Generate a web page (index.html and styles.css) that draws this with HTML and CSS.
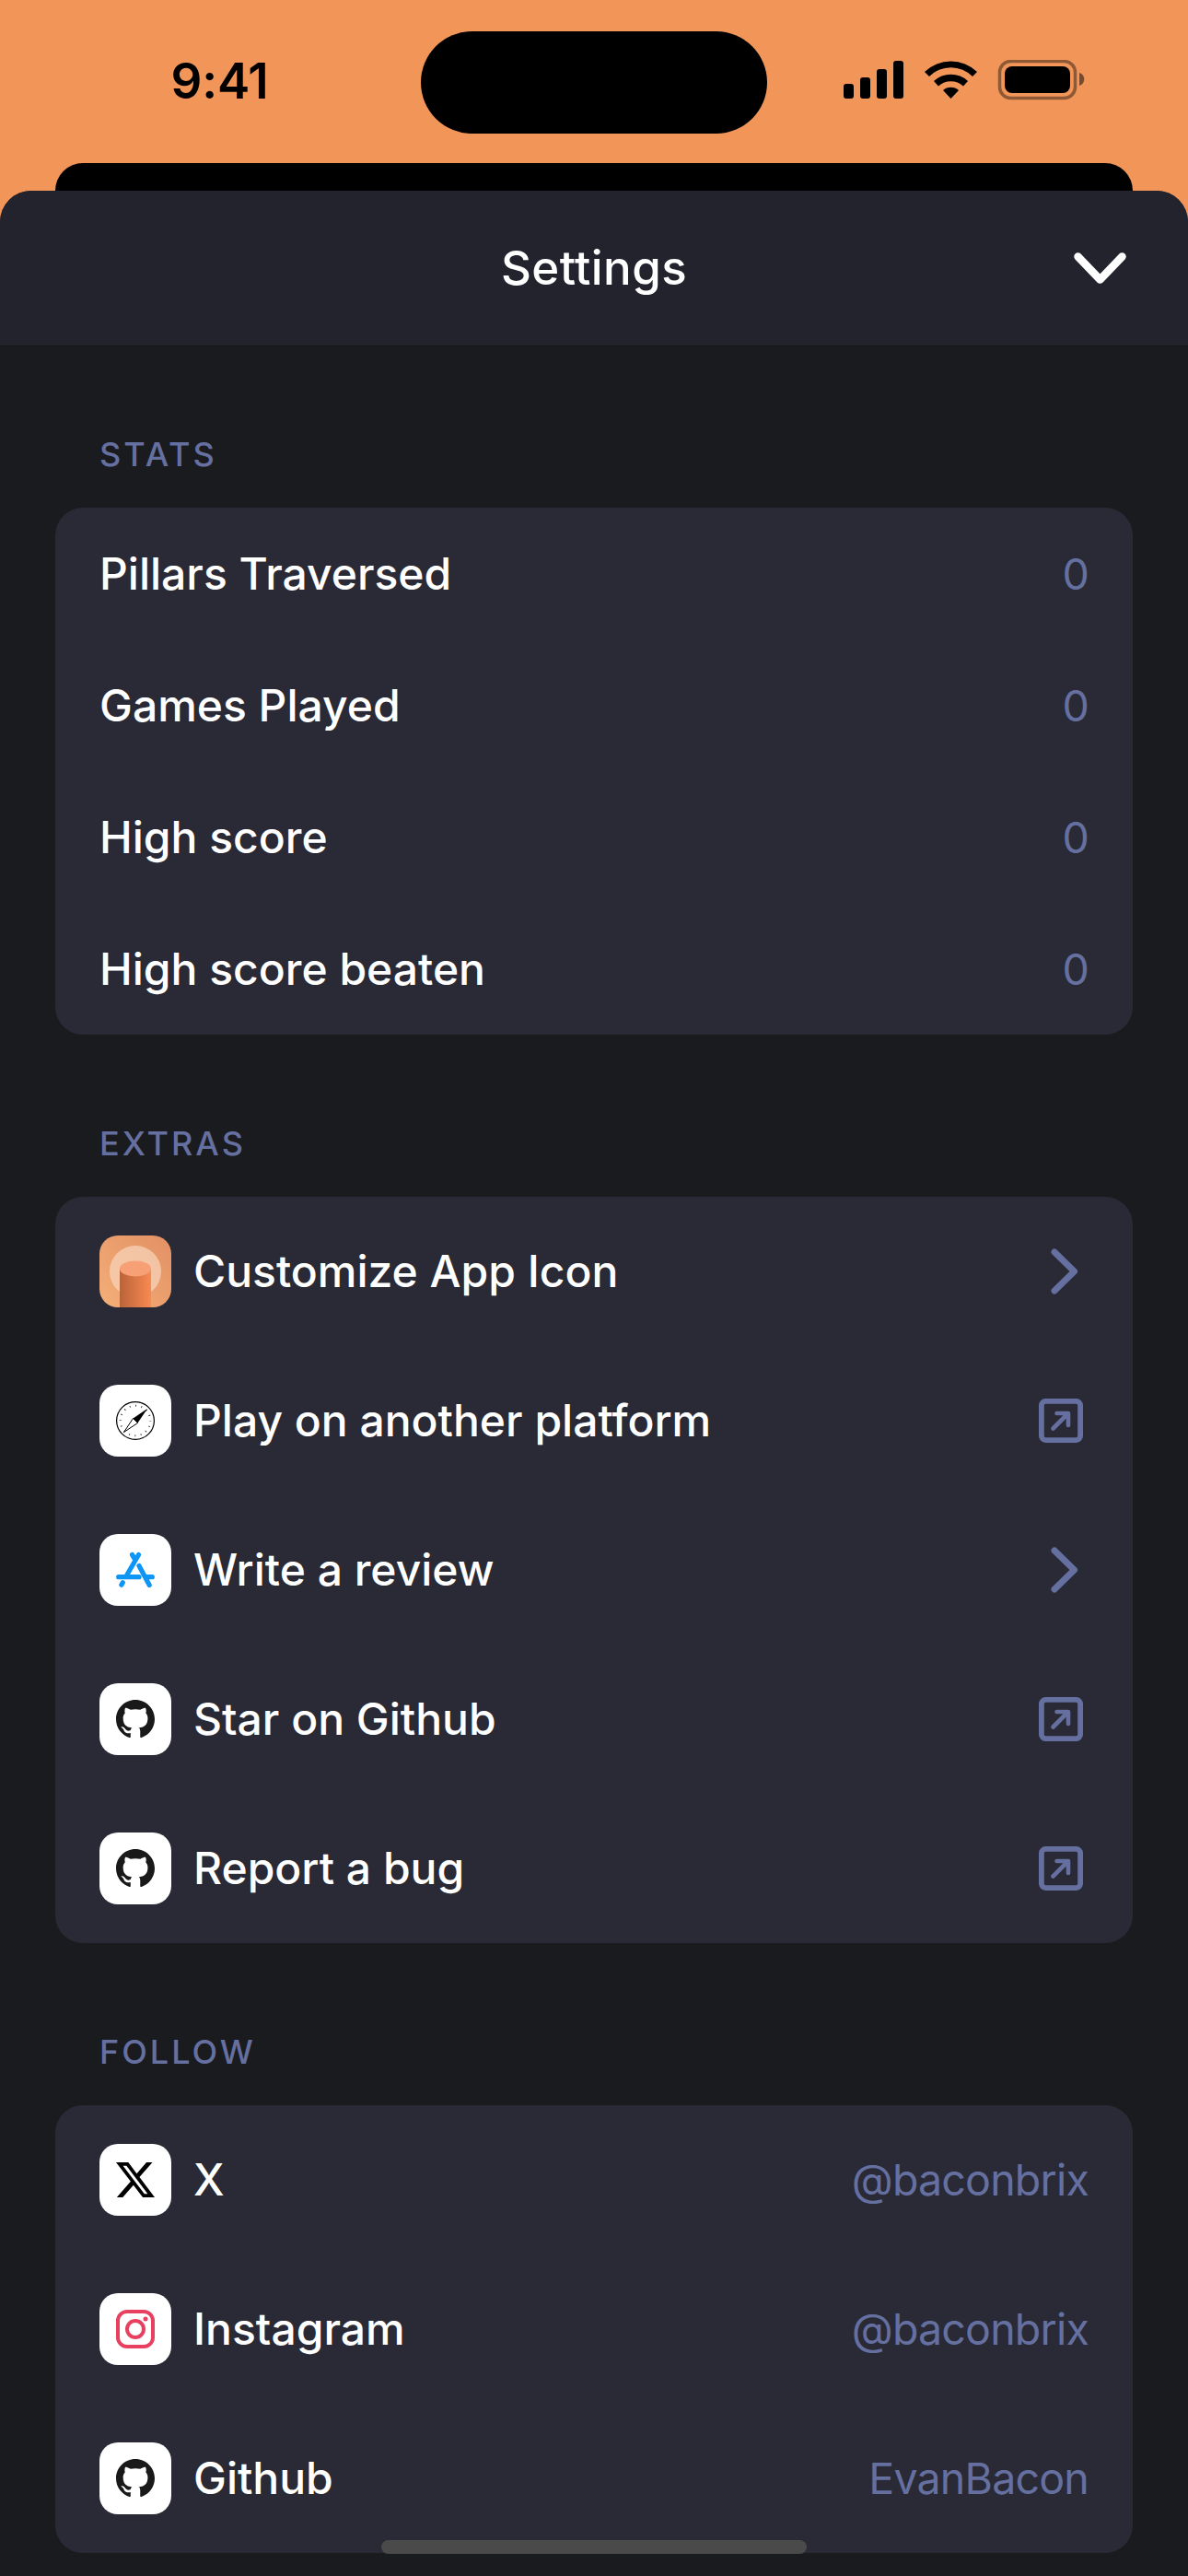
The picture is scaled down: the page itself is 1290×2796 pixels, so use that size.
FILE: index.html
```html
<!DOCTYPE html>
<html lang="en">
<head>
<meta charset="utf-8">
<title>Settings</title>
<link rel="stylesheet" href="styles.css">
</head>
<body>
<svg class="defs" aria-hidden="true">
  <defs>
    <symbol id="github" viewBox="0 0 16 16"><path d="M8 0C3.58 0 0 3.58 0 8c0 3.54 2.29 6.53 5.47 7.59.4.07.55-.17.55-.38 0-.19-.01-.82-.01-1.49-2.01.37-2.53-.49-2.69-.94-.09-.23-.48-.94-.82-1.13-.28-.15-.68-.52-.01-.53.63-.01 1.08.58 1.23.82.72 1.21 1.87.87 2.33.66.07-.52.28-.87.51-1.07-1.78-.2-3.64-.89-3.64-3.95 0-.87.31-1.59.82-2.15-.08-.2-.36-1.02.08-2.12 0 0 .67-.21 2.2.82.64-.18 1.32-.27 2-.27s1.36.09 2 .27c1.53-1.04 2.2-.82 2.2-.82.44 1.1.16 1.92.08 2.12.51.56.82 1.27.82 2.15 0 3.07-1.87 3.75-3.65 3.95.29.25.54.73.54 1.48 0 1.07-.01 1.93-.01 2.2 0 .21.15.46.55.38A8.01 8.01 0 0 0 16 8c0-4.42-3.58-8-8-8z"/></symbol>
    <symbol id="external" viewBox="0 0 48 48"><rect x="2.9" y="2.9" width="42.2" height="42.2" rx="4.5" fill="none" stroke="currentColor" stroke-width="5.8"/><path d="M15.500 32.500 31.500 16.500M19.500 16H32V29" fill="none" stroke="currentColor" stroke-width="4.600" stroke-linecap="round" stroke-linejoin="round"/></symbol>
    <symbol id="chevron" viewBox="0 0 30 50"><path d="M4 4 25.500 25 4 46" fill="none" stroke="currentColor" stroke-width="7" stroke-linecap="round" stroke-linejoin="round"/></symbol>
  </defs>
</svg>
<div class="screen">
  <header class="status">
    <span class="time">9:41</span>
    <span class="island"></span>
    <svg class="indicators" viewBox="0 0 262 44">
      <rect x="0" y="26" width="11" height="16" rx="3"/><rect x="18" y="19" width="11" height="23" rx="3"/><rect x="36" y="10" width="11" height="32" rx="3"/><rect x="54" y="1" width="11" height="41" rx="3"/>
      <path d="M88 13a41 41 0 0 1 57 0l-5 5a33 33 0 0 0-47 0zM98 23a27 27 0 0 1 37 0l-5 5.500a20 20 0 0 0-27 0zM108 33a13 13 0 0 1 17 0l-8.500 9z"/>
      <rect x="169.500" y="1.500" width="82" height="40" rx="12" fill="none" stroke="#000" stroke-opacity=".4" stroke-width="3.500"/>
      <rect x="175" y="7" width="71" height="29" rx="8"/><path d="M256 14c7 2 7 12 0 14z" opacity=".5"/>
    </svg>
  </header>
  <div class="backcard"></div>
  <main class="sheet">
    <div class="titlebar"><h1>Settings</h1><svg class="close" viewBox="0 0 57 34"><path d="M4.500 4.500 28.500 29.500 52.500 4.500" fill="none" stroke="#fff" stroke-width="8.500" stroke-linecap="round" stroke-linejoin="round"/></svg></div>
    <section>
      <h2>STATS</h2>
      <ul class="card stats">
        <li><span>Pillars Traversed</span><b>0</b></li>
        <li><span>Games Played</span><b>0</b></li>
        <li><span>High score</span><b>0</b></li>
        <li><span>High score beaten</span><b>0</b></li>
      </ul>
    </section>
    <section>
      <h2>EXTRAS</h2>
      <ul class="card">
        <li>
          <svg class="tile" viewBox="0 0 78 78">
            <defs>
              <linearGradient id="sky" x1="0" y1="1" x2="1" y2="0"><stop offset="0" stop-color="#f4af78"/><stop offset="1" stop-color="#e29064"/></linearGradient>
              <linearGradient id="pillar"><stop offset="0" stop-color="#b9633a"/><stop offset="1" stop-color="#f98a52"/></linearGradient>
            </defs>
            <rect width="78" height="78" fill="url(#sky)"/><circle cx="39" cy="39" r="28" fill="#f8d5bd" opacity=".7"/><path d="M22 36h34v42H22z" fill="url(#pillar)"/><ellipse cx="39" cy="36" rx="17" ry="8.500" fill="#f7a075"/>
          </svg>
          <span>Customize App Icon</span><svg class="chev"><use href="#chevron"/></svg>
        </li>
        <li>
          <svg class="tile white" viewBox="0 0 78 78">
            <circle cx="39" cy="39" r="20.400" fill="none" stroke="#000" stroke-width="1.200"/>
            <circle cx="39" cy="39" r="16.300" fill="none" stroke="#333" stroke-width="2" stroke-dasharray=".9 5.501" stroke-dashoffset=".45"/>
            <path d="M52 26 36.500 36.500 41.500 41.500z"/><path d="M36.500 36.500 26.500 51.500 41.500 41.500z" fill="#fff" stroke="#000"/>
          </svg>
          <span>Play on another platform</span><svg class="ext"><use href="#external"/></svg>
        </li>
        <li>
          <svg class="tile white" viewBox="0 0 78 78">
            <g stroke="#0d96f6" stroke-width="5.200" stroke-linecap="round" fill="none"><path d="M42.500 22.500 29.500 45M35.500 22.500 38 26.500M20.700 46.700H43M43 34.500 54.200 55.500M51 46.700H57.300M25.300 52.800 23.900 55.300"/></g>
          </svg>
          <span>Write a review</span><svg class="chev"><use href="#chevron"/></svg>
        </li>
        <li><span class="tile white"><svg class="mark"><use href="#github"/></svg></span><span>Star on Github</span><svg class="ext"><use href="#external"/></svg></li>
        <li><span class="tile white"><svg class="mark"><use href="#github"/></svg></span><span>Report a bug</span><svg class="ext"><use href="#external"/></svg></li>
      </ul>
    </section>
    <section>
      <h2>FOLLOW</h2>
      <ul class="card">
        <li>
          <svg class="tile white" viewBox="0 0 78 78"><path transform="translate(18 18) scale(1.75)" fill="#000" d="M18.901 1.153h3.680l-8.040 9.190L24 22.846h-7.406l-5.800-7.584-6.638 7.584H.474l8.600-9.830L0 1.154h7.594l5.243 6.932ZM17.610 20.644h2.039L6.486 3.240H4.298Z"/></svg>
          <span>X</span><b>@baconbrix</b>
        </li>
        <li>
          <svg class="tile white" viewBox="0 0 78 78"><g fill="none" stroke="#e8405f" stroke-width="4"><rect x="20" y="20" width="38" height="38" rx="10"/><circle cx="39" cy="39" r="9"/></g><circle cx="50" cy="28" r="2.500" fill="#e8405f"/></svg>
          <span>Instagram</span><b>@baconbrix</b>
        </li>
        <li><span class="tile white"><svg class="mark"><use href="#github"/></svg></span><span>Github</span><b>EvanBacon</b></li>
      </ul>
    </section>
  </main>
  <div class="home"></div>
</div>
</body>
</html>
```
FILE: styles.css
```css
* { box-sizing: border-box; }
body { margin: 0; background: #f19559; font-family: Inter, "Liberation Sans", sans-serif; color: #fff; }
.defs { position: absolute; width: 0; height: 0; }
.screen { position: relative; width: 1290px; height: 2796px; overflow: hidden; }
.status { display: grid; grid-template-columns: 457px 376px 457px; align-items: center; height: 177px; }
.time { justify-self: center; padding-left: 20px; font-size: 53px; font-weight: 600; line-height: 58px; margin-top: -2px; letter-spacing: -.2px; color: #000; }
.island { height: 111px; margin-top: 1px; border-radius: 56px; background: #000; }
.indicators { width: 262px; height: 44px; margin: -3px 0 0 83px; }
.backcard { height: 30px; margin: 0 60px; border-radius: 30px 30px 0 0; background: #000; }
.sheet { height: 2589px; border-radius: 34px 34px 0 0; overflow: hidden; background: #1a1b1f; }
.titlebar { display: grid; grid-template-columns: 1fr auto 1fr; align-items: center; height: 169px; border-bottom: 1px solid #141419; background: #23232d; }
h1 { grid-column: 2; margin: 0; font-size: 51px; font-weight: 500; line-height: 60px; letter-spacing: .4px; }
.close { justify-self: end; width: 57px; height: 34px; margin-right: 67px; }
h2 { height: 175px; margin: 0; padding: 95px 0 0 108px; font-size: 36px; font-weight: 500; line-height: 44px; letter-spacing: 3px; color: #6570a0; }
section + section h2 { height: 176px; padding-top: 96px; }
.card { margin: 0 60px; padding: 0; list-style: none; border-radius: 30px; background: #292a35; }
li { display: flex; align-items: center; gap: 24px; height: 162px; padding: 0 48px; font-size: 48px; font-weight: 500; line-height: 58px; }
.stats li { height: 143px; }
b { margin-left: auto; font-size: 46.5px; font-weight: 400; letter-spacing: -.8px; color: #6570a0; }
.tile { display: flex; align-items: center; justify-content: center; flex: none; width: 78px; height: 78px; border-radius: 20px; color: #191919; overflow: hidden; }
.white { background: #fff; }
.mark { width: 42px; height: 42px; fill: #191919; }
.chev { width: 30px; height: 50px; margin: 0 11px 0 auto; color: #6570a0; }
.ext { width: 48px; height: 48px; margin: 0 6px 0 auto; color: #6570a0; }
.home { position: absolute; left: 414px; top: 2757px; width: 462px; height: 15px; border-radius: 8px; background: #4a4a4a; }
```
